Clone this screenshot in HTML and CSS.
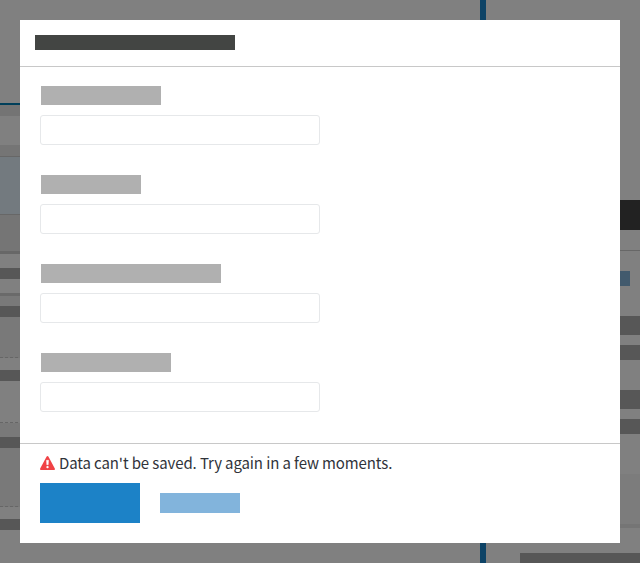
FILE: index.html
```html
<!DOCTYPE html>
<html lang="en">
<head>
<meta charset="utf-8">
<title>Edit details</title>
<link rel="stylesheet" href="styles.css">
</head>
<body>
<div class="page" aria-hidden="true">
  <div class="list">
    <div class="top"></div>
    <div class="toolbar"></div>
    <div class="filters"></div>
    <div class="columns"></div>
    <div class="selected"></div>
    <div class="group"></div>
    <div class="entry ruled"><i></i></div>
    <div class="entry tall"><i></i></div>
    <div class="entry plain"><i></i></div>
    <div class="entry long"><i></i></div>
    <div class="entry last"><i></i></div>
  </div>
  <div class="divider"></div>
  <div class="detail">
    <div class="banner"></div>
    <div class="link"></div>
    <div class="bar large"></div>
    <div class="bar"></div>
    <div class="bar large second"></div>
    <div class="bar"></div>
    <div class="panel"></div>
    <div class="bar end"></div>
  </div>
</div>
<main class="dialog" role="dialog">
  <header class="head"><div class="title"></div></header>
  <form class="fields">
    <div class="field"><span class="label w120"></span><input class="input" type="text"></div>
    <div class="field"><span class="label w100"></span><input class="input" type="text"></div>
    <div class="field"><span class="label w180"></span><input class="input" type="text"></div>
    <div class="field"><span class="label w130"></span><input class="input" type="text"></div>
  </form>
  <footer class="foot">
    <p class="error">
      <svg class="icon" viewBox="0 0 15 14"><path d="M6.5.7Q7.5-.7 8.5.7L14.8 12.6Q15.4 14 14 14H1Q-.4 14 .2 12.6Z" fill="#f04245"/><path d="M6.5 4.3h2L8.2 8.8H6.8Z" fill="#fff" stroke="#fff" stroke-width=".5" stroke-linejoin="round"/><circle cx="7.5" cy="11.1" r="1.2" fill="#fff"/></svg>
      <span>Data can't be saved. Try again in a few moments.</span>
    </p>
    <div class="actions"><div class="save"></div><div class="cancel"></div></div>
  </footer>
</main>
</body>
</html>
```
FILE: styles.css
```css
* { box-sizing: border-box; }
body {
  margin: 0;
  height: 563px;
  overflow: hidden;
  position: relative;
  background: #808080;
}
.page { display: flex; height: 563px; overflow: hidden; }
.list { width: 480px; }
.divider { width: 6px; background: #0d4366; }
.detail { width: 154px; }

.top { height: 105px; border-bottom: 2px solid #003f5a; }
.toolbar { height: 11px; background: #747474; }
.filters { height: 29px; }
.columns { height: 12px; background: #757575; border-bottom: 1px solid #676767; }
.selected { height: 58px; background: #737a7f; border-bottom: 1px solid #676767; }
.group { height: 39px; background: #757575; border-bottom: 3px solid #676767; }
.entry { display: flow-root; }
.entry i { display: block; height: 11px; margin-top: 14px; background: #575757; }
.ruled { height: 42px; border-bottom: 3px solid #6a6a6a; }
.tall { height: 62px; background: #797979; border-bottom: 1px dashed #666; }
.tall i { margin-top: 10px; }
.plain { height: 65px; border-bottom: 1px dashed #666; }
.plain i, .last i { margin-top: 12px; }
.long { height: 84px; background: #797979; border-bottom: 1px dashed #666; }

.banner { height: 51px; margin-top: 200px; border-top: 30px solid #222; border-bottom: 1px solid #676767; }
.link { width: 144px; height: 15px; margin: 20px 0 30px; background: #425a6d; }
.bar { height: 15px; background: #575757; }
.large { height: 19px; margin-bottom: 10px; }
.second { margin-top: 30px; }
.panel { height: 54px; margin-top: 40px; background: #7c7c7c; border-bottom: 4px solid #757575; }
.end { margin: 25px 0 0 34px; }

.dialog {
  position: absolute;
  inset: 20px;
  display: flex;
  flex-direction: column;
  background: #fff;
}
.head { height: 47px; padding: 15px; border-bottom: 1px solid #c8c8c8; }
.title { width: 200px; height: 15px; background: #434543; }
.fields { flex: 1; padding: 19px 20px 0; }
.field { height: 89px; }
.label { display: block; height: 19px; margin: 0 0 10px 1px; background: #b0b0b0; }
.w120 { width: 120px; }
.w100 { width: 100px; }
.w180 { width: 180px; }
.w130 { width: 130px; }
.input {
  display: block;
  width: 280px;
  height: 30px;
  border: 1px solid #e6e8ea;
  border-radius: 3px;
  background: #fff;
}
.foot { height: 100px; padding: 9px 20px 20px; border-top: 1px solid #c8c8c8; }
.error {
  display: flex;
  align-items: center;
  gap: 4px;
  height: 20px;
  margin: 0 0 10px;
  color: #30333a;
  font: 15px/20px "Noto Sans CJK JP", sans-serif;
  letter-spacing: -0.11px;
  white-space: nowrap;
}
.icon { width: 15px; height: 14px; }
.actions { display: flex; align-items: center; gap: 20px; }
.save { width: 100px; height: 40px; background: #1c82c7; }
.cancel { width: 80px; height: 20px; background: #82b4dc; }
```
